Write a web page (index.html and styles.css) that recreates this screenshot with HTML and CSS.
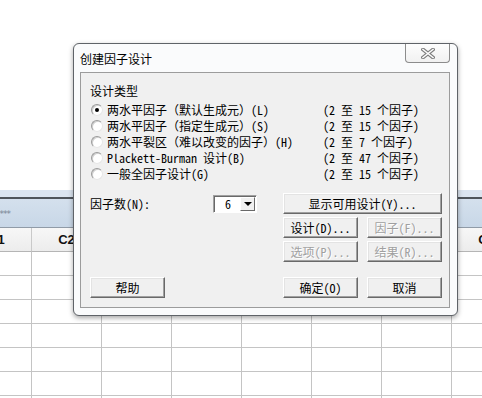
FILE: index.html
```html
<!DOCTYPE html>
<html lang="zh-CN">
<head>
  <meta charset="UTF-8">
  <title>创建因子设计</title>
  <link rel="stylesheet" href="styles.css">
</head>
<body>
  <div class="desk"></div>
  <div class="sheet">
    <div class="sheet-band"></div>
    <div class="sheet-title">****</div>
    <div class="grid">
      <div class="cell head">C1</div>
      <div class="cell head">C2</div>
      <div class="cell head">C3</div>
      <div class="cell head">C4</div>
      <div class="cell head">C5</div>
      <div class="cell head">C6</div>
      <div class="cell head">C7</div>
      <div class="cell head">C8</div>
    </div>
    <div class="grid rows" id="rows"></div>
  </div>

  <div class="dialog">
    <div class="titlebar">
      <span class="caption">创建因子设计</span>
      <span class="close">
        <svg width="14" height="11" viewBox="0 0 14 11">
          <path d="M2 1.5 L12 9.5 M12 1.5 L2 9.5" stroke="#7d7d7d" stroke-width="3.6" stroke-linecap="square" fill="none"/>
          <path d="M2 1.5 L12 9.5 M12 1.5 L2 9.5" stroke="#fdfdfd" stroke-width="1.6" stroke-linecap="square" fill="none"/>
        </svg>
      </span>
    </div>
    <div class="client">
      <div class="group-label">设计类型</div>
      <div class="option"><span class="radio checked"></span><span>两水平因子（默认生成元）(L)</span><span class="range">(2 至 15 个因子)</span></div>
      <div class="option"><span class="radio"></span><span>两水平因子（指定生成元）(S)</span><span class="range">(2 至 15 个因子)</span></div>
      <div class="option"><span class="radio"></span><span>两水平裂区（难以改变的因子）(H)</span><span class="range">(2 至 7 个因子)</span></div>
      <div class="option"><span class="radio"></span><span>Plackett-Burman 设计(B)</span><span class="range">(2 至 47 个因子)</span></div>
      <div class="option"><span class="radio"></span><span>一般全因子设计(G)</span><span class="range">(2 至 15 个因子)</span></div>

      <div class="factor-row">
        <span class="factor-label">因子数(N):</span>
        <span class="combo"><span class="combo-value">6</span><span class="combo-arrow"></span></span>
        <button class="btn wide">显示可用设计(Y)...</button>
      </div>
      <div class="btn-row">
        <button class="btn">设计(D)...</button>
        <button class="btn" disabled>因子(F)...</button>
      </div>
      <div class="btn-row">
        <button class="btn" disabled>选项(P)...</button>
        <button class="btn" disabled>结果(R)...</button>
      </div>

      <div class="footer">
        <button class="btn">帮助</button>
        <div class="footer-right">
          <button class="btn">确定(O)</button>
          <button class="btn">取消</button>
        </div>
      </div>
    </div>
  </div>

  <script>
    var rows = document.getElementById('rows');
    for (var i = 0; i < 7 * 8; i++) {
      var c = document.createElement('div');
      c.className = 'cell';
      rows.appendChild(c);
    }
  </script>
</body>
</html>
```

FILE: styles.css
```css
body {
  margin: 0;
  width: 482px;
  height: 398px;
  overflow: hidden;
  background-color: #fff;
  position: relative;
  font-family: "Noto Sans Mono CJK SC", "Noto Sans CJK SC", monospace;
  font-size: 12px;
  color: #000;
}
.desk {
  height: 190px;
  background-color: #fff;
}
.sheet-band {
  height: 7px;
  background-color: #dbe5f0;
  border-bottom: 2px solid #4f555b;
}
.sheet-title {
  height: 28px;
  line-height: 30px;
  margin-left: -4px;
  color: #7b8796;
  font-family: "DejaVu Sans", sans-serif;
  font-size: 9px;
  letter-spacing: -1px;
  background: linear-gradient(#d4e0ed, #c8d7e7);
  border-bottom: 1px solid #909ba7;
}
.grid {
  display: grid;
  grid-template-columns: repeat(8, 70px);
  grid-auto-rows: 24px;
  margin-left: -38px;
}
.cell {
  box-sizing: border-box;
  border-right: 1px solid #c4c4c4;
  border-bottom: 1px solid #c4c4c4;
}
.cell.head {
  background: linear-gradient(#f7f7f7, #ececec);
  border-bottom-color: #b5b5b5;
  border-right-color: #c9c9c9;
  font-family: "Liberation Sans", sans-serif;
  font-weight: bold;
  font-size: 13px;
  text-align: center;
  line-height: 24px;
  color: #111;
}

/* dialog window */
.dialog {
  position: absolute;
  left: 73px;
  top: 43px;
  width: 385px;
  height: 273px;
  box-sizing: border-box;
  border: 1px solid #5f6368;
  border-radius: 6px;
  background-color: #fafbfc;
  padding: 0 7px 7px 6px;
  box-shadow: 0 2px 5px rgba(0, 0, 0, 0.35);
  display: flex;
  flex-direction: column;
}
.titlebar {
  height: 28px;
  display: flex;
  align-items: center;
}
.caption {
  font-family: "Noto Sans CJK SC", sans-serif;
  font-size: 12px;
  line-height: 16px;
  padding-top: 1px;
}
.close {
  margin-left: auto;
  align-self: flex-start;
  width: 45px;
  height: 19px;
  box-sizing: border-box;
  border: 1px solid #8c8c8c;
  border-top: none;
  border-radius: 0 0 4px 4px;
  background: linear-gradient(#fdfdfd, #f1f1f1);
  display: flex;
  align-items: center;
  justify-content: center;
}
.close svg {
  display: block;
  margin-left: 1px;
}
.client {
  flex: 1;
  box-sizing: border-box;
  border: 1px solid #9c9c9c;
  background-color: #f0f0f0;
  padding: 10px 7px 0 9px;
  display: flex;
  flex-direction: column;
}
.group-label {
  height: 16px;
  line-height: 16px;
  margin-bottom: 3px;
}
.option {
  height: 16px;
  line-height: 16px;
  display: grid;
  grid-template-columns: 17px 216px auto;
  align-items: center;
  white-space: pre;
}
.radio {
  width: 12px;
  height: 12px;
  box-sizing: border-box;
  margin-left: 1px;
  border-radius: 50%;
  background-color: #fff;
  border: 1px solid;
  border-color: #9a9a9a #e6e6e6 #e6e6e6 #9a9a9a;
  box-shadow: inset 1px 1px 0 #d0d0d0;
  display: flex;
  align-items: center;
  justify-content: center;
}
.radio.checked::after {
  content: "";
  width: 4px;
  height: 4px;
  border-radius: 50%;
  background-color: #000;
}
.range {
  white-space: pre;
}
.factor-row {
  margin-top: 11px;
  height: 21px;
  display: flex;
  align-items: center;
}
.factor-label {
  width: 123px;
}
.combo {
  width: 44px;
  height: 18px;
  box-sizing: border-box;
  background-color: #fff;
  border: 1px solid;
  border-color: #a0a0a0 #fff #fff #a0a0a0;
  box-shadow: inset 1px 1px 0 #696969;
  display: flex;
  align-items: center;
  padding: 1px 1px 1px 2px;
}
.combo-value {
  flex: 1;
  padding-left: 9px;
  line-height: 14px;
}
.combo-arrow {
  width: 15px;
  height: 14px;
  box-sizing: border-box;
  background-color: #f0f0f0;
  border: 1px solid;
  border-color: #fff #696969 #696969 #fff;
  display: flex;
  align-items: center;
  justify-content: center;
}
.combo-arrow::after {
  content: "";
  border-left: 4px solid transparent;
  border-right: 4px solid transparent;
  border-top: 4px solid #000;
  margin-top: 1px;
}
.btn {
  width: 75px;
  height: 21px;
  box-sizing: border-box;
  padding: 0;
  font-family: inherit;
  font-size: 12px;
  color: #000;
  background-color: #f0f0f0;
  border: 1px solid;
  border-color: #fff #696969 #696969 #fff;
  box-shadow: inset -1px -1px 0 #a0a0a0, inset 1px 1px 0 #e3e3e3;
  white-space: pre;
}
.btn[disabled] {
  color: #a0a0a0;
  text-shadow: 1px 1px 0 #fff;
}
.btn.wide {
  width: 159px;
  margin-left: auto;
}
.btn-row {
  margin-top: 3px;
  display: flex;
  justify-content: flex-end;
  gap: 9px;
}
.footer {
  margin-top: 15px;
  display: flex;
}
.footer-right {
  margin-left: auto;
  display: flex;
  gap: 9px;
}
```
